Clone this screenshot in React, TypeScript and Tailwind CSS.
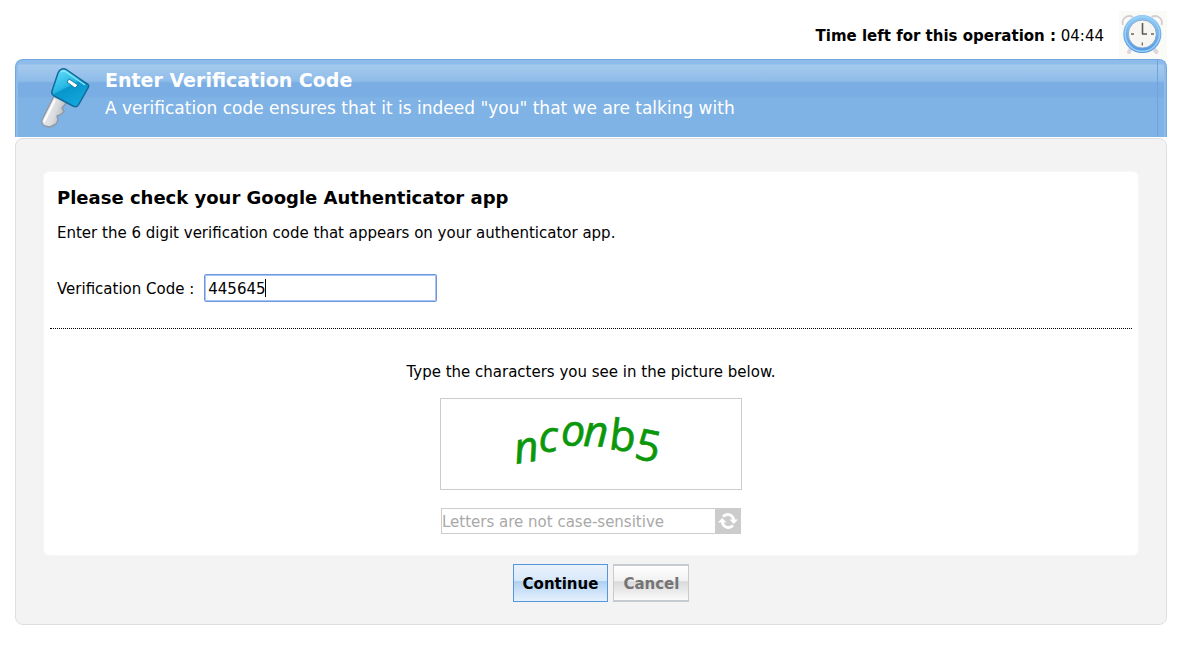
import { useState } from "react";

function ClockIcon() {
  return (
    <svg viewBox="0 0 48 48" className="size-12 shrink-0" role="img" aria-label="Time left">
      <defs>
        <linearGradient id="rim" x1="0" y1="0" x2="0" y2="1">
          <stop offset="0" stopColor="#8fc8f3" />
          <stop offset="1" stopColor="#5598e2" />
        </linearGradient>
      </defs>
      <rect width="48" height="48" fill="#fafaf7" />
      <g fill="none" stroke="#d3ccd4" strokeWidth="1.8">
        <path d="M4 14C2 8 8 3 14 6" />
        <path d="M42.500 14C44.500 8 38.500 3 32.500 6" />
      </g>
      <path d="M11 39l-1 2M36 39l1.500 2" stroke="#dcd6dd" strokeWidth="4" strokeLinecap="round" />
      <circle cx="23.3" cy="23" r="16.6" fill="#f6f5f2" stroke="url(#rim)" strokeWidth="5" />
      <circle cx="23.3" cy="23" r="17.2" fill="none" stroke="#9bd0f7" strokeWidth="1.4" />
      <circle cx="23.3" cy="23" r="14" fill="none" stroke="#6f9dcc" strokeWidth="0.8" />
      <path d="M23.5 12v11.2M23 23h5" fill="none" stroke="#5d5955" strokeWidth="1.6" />
      <path d="M12 23h3M32 23h3M23.3 31.5v3" stroke="#6b655c" strokeWidth="1.3" />
    </svg>
  );
}

function KeyIcon() {
  return (
    <svg viewBox="0 0 52 66" className="h-[66px] w-13 shrink-0" aria-hidden="true">
      <defs>
        <linearGradient id="head" x1="0.2" y1="0" x2="0.7" y2="1">
          <stop offset="0" stopColor="#62dcf8" />
          <stop offset="0.45" stopColor="#25b6e4" />
          <stop offset="0.5" stopColor="#0895cb" />
          <stop offset="1" stopColor="#14a9dd" />
        </linearGradient>
        <linearGradient id="blade" x1="0" y1="0" x2="1" y2="0.4">
          <stop offset="0" stopColor="#f4f4f5" />
          <stop offset="0.6" stopColor="#dcdde0" />
          <stop offset="1" stopColor="#aeb2b8" />
        </linearGradient>
      </defs>
      <path
        d="M14 30L2 54Q1 58 5 60L10 61L16 58L18 54L17 50L20 49L24 46L22 42L28 35Z"
        fill="url(#blade)"
        stroke="#8f99a6"
        strokeWidth="1.4"
        strokeLinejoin="round"
      />
      <path d="M15 34L4 56" stroke="#fff" strokeWidth="1.8" />
      <path
        d="M22 3Q24 2 27 4L46 17Q50 19 48 22L39 38Q37 42 33 40L14 30Q11 28 12 25L18 7Q19 4 22 3Z"
        fill="url(#head)"
        stroke="#136a99"
        strokeWidth="1.5"
      />
      <path d="M21 6Q23 4 26 6L45 19" fill="none" stroke="#8ee9fb" strokeWidth="1.3" />
      <path d="M29 13L38 19L35 22L27 16Z" fill="#fff" stroke="#1b7fae" strokeWidth="1" />
    </svg>
  );
}

function Captcha() {
  return (
    <svg viewBox="441 399 300 90" className="h-[90px] w-[300px]" role="img" aria-label="Captcha">
      <text
        x="516 539 561 583 608 633"
        y="464 452 446 446 449 458"
        rotate="-9 -2 0 2 7 12"
        fill="#0b970b"
        stroke="#0b970b"
        strokeWidth="0.7"
        fontSize="43"
        className="font-['Open_Sans',sans-serif]"
      >
        <tspan className="italic">ncon</tspan>
        <tspan>b5</tspan>
      </text>
    </svg>
  );
}

export default function App() {
  const [code, setCode] = useState("445645");
  const [touched, setTouched] = useState(false);

  return (
    <main className="bg-white pt-[11px] pr-3 pb-5 pl-[15px] font-['DejaVu_Sans',sans-serif] text-[15px] leading-5 text-black">
      <div className="flex items-center justify-end gap-[15px]">
        <p className="pt-0.5">
          <strong>Time left for this operation :</strong> 04:44
        </p>
        <ClockIcon />
      </div>

      <header className="flex h-[78px] rounded-t-lg border-x border-t border-[#6fa8e2] bg-[linear-gradient(to_bottom,#8dbcea_0px,#8dbcea_4px,#a6caee_5px,#8ebce9_21px,#79ade3_23px,#79ade3_36px,#7fb2e5_38px)]">
        <div className="flex min-w-0 flex-1 gap-[13px] rounded-tl-lg border-l-2 border-[#8dbbea] pt-1.5 pl-[22px]">
          <KeyIcon />
          <div className="pt-0.5 text-white">
            <h1 className="text-[19px] leading-6 font-bold">Enter Verification Code</h1>
            <p className="pt-1 text-[17px] leading-6">
              A verification code ensures that it is indeed "you" that we are talking with
            </p>
          </div>
        </div>
        <div className="w-[9px] rounded-tr-lg border-r-2 border-l border-r-[#8dbbea] border-l-[#6fa3dd]" />
      </header>

      <form
        className="mt-px rounded-lg border border-[#dfdfdf] bg-[#f3f3f3] px-[27px] pt-8 pb-[22px]"
        onSubmit={(e) => e.preventDefault()}
      >
        <section className="rounded-md border border-[#f7f7f7] bg-white px-1.5 pt-3 pb-[21px]">
          <div className="px-[7px]">
            <h2 className="text-lg leading-7 font-bold">Please check your Google Authenticator app</h2>
            <p className="pt-[11px]">Enter the 6 digit verification code that appears on your authenticator app.</p>
            <div className="flex items-center gap-2.5 pt-[31px] pb-[26px]">
              <label htmlFor="code" className="pt-px">
                Verification Code :
              </label>
              <div className="relative">
                <input
                  id="code"
                  value={code}
                  onFocus={() => setTouched(true)}
                  onChange={(e) => setCode(e.target.value)}
                  className="block h-7 w-[233px] rounded-xs border border-[#6f97dc] bg-white px-[3px] pt-0.5 ring-1 ring-[#a9c4f2] outline-none ring-inset"
                />
                {!touched && <span className="absolute top-[5px] left-[61px] h-[18px] w-px bg-black" />}
              </div>
            </div>
          </div>

          <div className="flex flex-col items-center border-t border-dotted border-black pt-[33px]">
            <label htmlFor="captcha">Type the characters you see in the picture below.</label>
            <div className="mt-4 border border-[#cccccc]">
              <Captcha />
            </div>
            <div className="mt-[18px] flex h-[26px] w-[300px]">
              <input
                id="captcha"
                placeholder="Letters are not case-sensitive"
                className="min-w-0 flex-1 border border-r-0 border-[#cccccc] bg-white pt-0.5 outline-none placeholder:text-[#a9a9a9]"
              />
              <button
                type="button"
                aria-label="Refresh picture"
                className="flex w-[26px] items-center justify-center bg-[#cccccc]"
              >
                <svg viewBox="0 0 20 18" className="h-[18px] w-5" aria-hidden="true">
                  <g fill="none" stroke="#fff" strokeWidth="2.8">
                    <path d="M5 4.600C8 1.200 14.500 1.800 15.800 8" />
                    <path d="M15 13.400C12 16.800 5.500 16.200 4.200 10" />
                  </g>
                  <path d="M11.500 7.500H20L15.800 12ZM8.500 10.500H0L4.200 6Z" fill="#fff" />
                </svg>
              </button>
            </div>
          </div>
        </section>

        <div className="flex justify-center gap-[5px] pt-2 pl-5">
          <button
            type="submit"
            className="h-[38px] border border-[#5596df] bg-[linear-gradient(to_bottom,#e9f2fc_0%,#d8e8f9_44%,#b0d0f1_46%,#c9e0f7_70%,#e5f1fd_100%)] px-[9px] pt-0.5 font-bold"
          >
            Continue
          </button>
          <button
            type="button"
            className="h-[38px] border-x border-y-2 border-[#c6cbd2] bg-[linear-gradient(to_bottom,#ffffff_0%,#f1f1f1_44%,#dadada_46%,#e8e8e8_70%,#fbfbfb_100%)] px-[9px] pt-0.5 font-bold text-[#747474]"
          >
            Cancel
          </button>
        </div>
      </form>
    </main>
  );
}
